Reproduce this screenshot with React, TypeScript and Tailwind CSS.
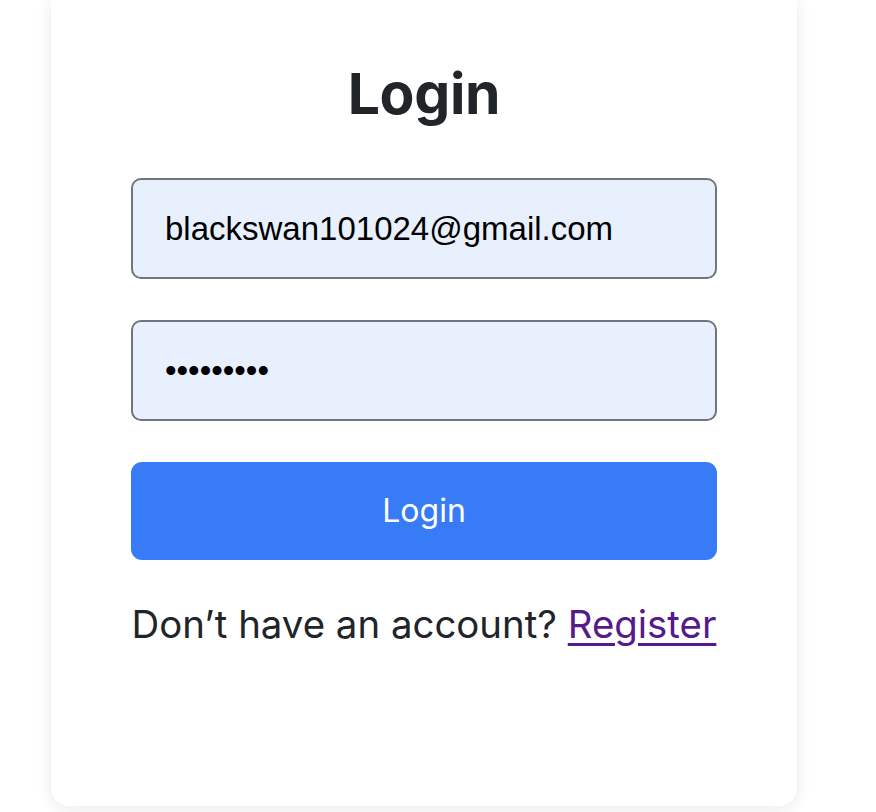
import React from 'react'

const inter = { fontFamily: 'Inter, "Noto Sans", sans-serif' }

export default function App() {
    return (
        <div className="min-h-[812px] w-full bg-white overflow-hidden" style={inter}>
            <div className="ml-[51px] w-[746px] h-[806px] bg-white rounded-b-[18px] shadow-[0_2px_16px_rgba(0,0,0,0.09)] px-[80px] pt-[59px] flex flex-col">
                <h1 className="text-center text-[57px] leading-[69px] font-bold text-[#212529] tracking-[-0.3px]">
                    Login
                </h1>

                <form className="mt-[50px] flex flex-col gap-[41px]" onSubmit={(e) => e.preventDefault()}>
                    <input
                        type="email"
                        readOnly
                        value="blackswan101024@gmail.com"
                        className="h-[101px] w-full rounded-[10px] border-2 border-[#71757c] bg-[#e8f0fe] px-[32px] text-[33px] text-black outline-none"
                        style={{ fontFamily: '"Liberation Sans", Arial, sans-serif' }}
                    />
                    <input
                        type="password"
                        readOnly
                        value="123456789"
                        className="h-[101px] w-full rounded-[10px] border-2 border-[#71757c] bg-[#e8f0fe] px-[32px] text-[33px] text-black outline-none"
                        style={{ fontFamily: '"Liberation Sans", Arial, sans-serif' }}
                    />
                    <button
                        type="submit"
                        className="h-[98px] w-full rounded-[11px] bg-[#377bf6] text-white text-[32px] font-normal"
                    >
                        Login
                    </button>
                </form>

                <p className="mt-[42px] text-center text-[38.4px] leading-[45px] text-[#212529] whitespace-nowrap">
                    Don’t have an account?{' '}
                    <a href="#" className="text-[#551a8b] underline underline-offset-[5px] decoration-[3px]">
                        Register
                    </a>
                </p>
            </div>
        </div>
    )
}
